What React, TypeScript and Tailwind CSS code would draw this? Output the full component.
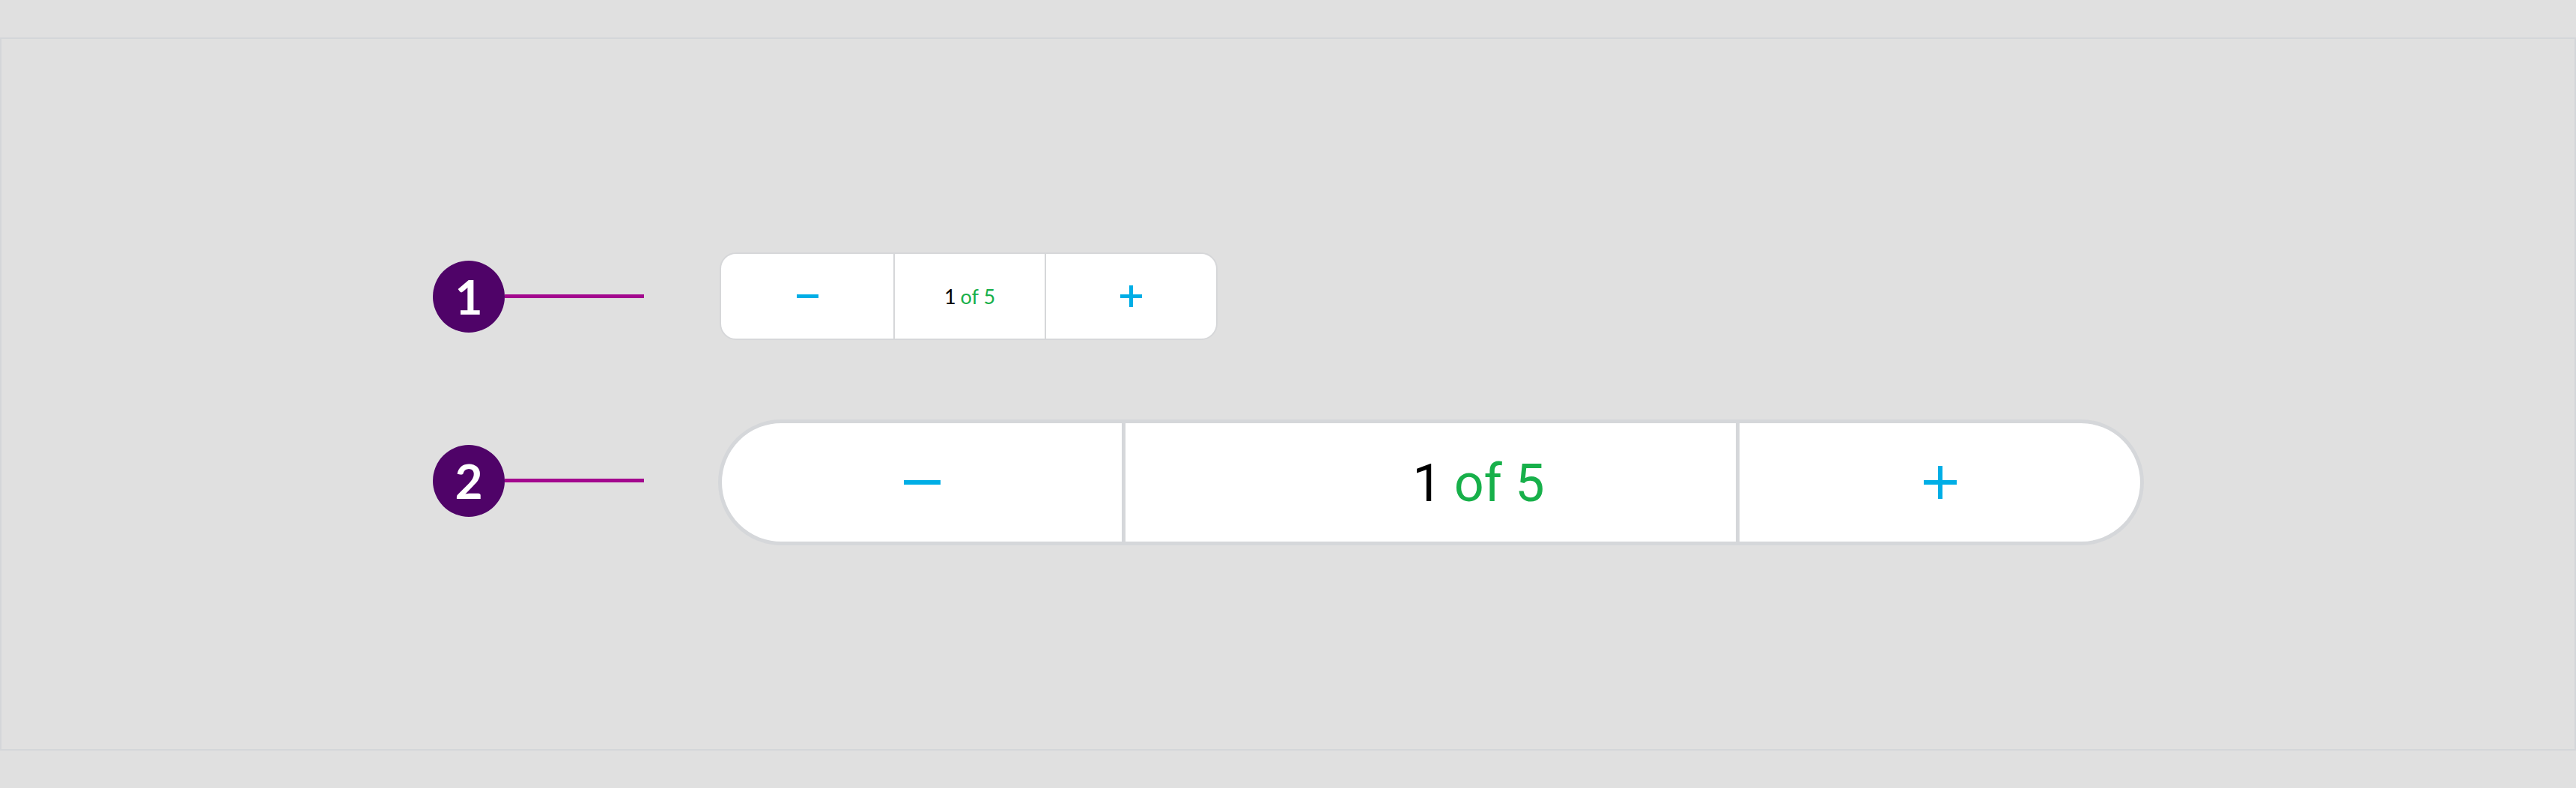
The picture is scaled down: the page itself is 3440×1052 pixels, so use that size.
// Stepper annotation sheet: two sizes of the "1 of 5" pager control

function Badge({ n, lift = 0 }: { n: number; lift?: number }) {
  return (
    <div className={lift ? "flex items-center -mt-[5px]" : "flex items-center"}>
      <div className="w-[96px] h-[96px] rounded-full bg-[#4f0368] flex items-center justify-center text-white font-['Lato',sans-serif] font-bold text-[64px] leading-none">
        {n}
      </div>
      <div className="w-[186px] h-[5px] bg-[#a3078e]" />
    </div>
  );
}

function Minus({ w, t }: { w: number; t: number }) {
  return (
    <svg width={w} height={t} viewBox={`0 0 ${w} ${t}`}>
      <rect x="0" y="0" width={w} height={t} fill="#00aee6" />
    </svg>
  );
}

function Plus({ s, t }: { s: number; t: number }) {
  const m = (s - t) / 2;
  return (
    <svg width={s} height={s} viewBox={`0 0 ${s} ${s}`}>
      <rect x="0" y={m} width={s} height={t} fill="#00aee6" />
      <rect x={m} y="0" width={t} height={s} fill="#00aee6" />
    </svg>
  );
}

export default function App() {
  return (
    <main className="min-h-[1052px] w-full bg-[#e0e0e0] pt-[50px]">
      <div className="h-[952px] w-full border-2 border-[#d4d6d9] pl-[576px] pt-[285px] flex flex-col gap-[106px]">
        {/* Small stepper */}
        <div className="flex items-center h-[117px]">
          <Badge n={1} />
          <div className="ml-[101px] flex w-[665px] h-[117px] border-2 border-[#d6d7d9] rounded-[22px] overflow-hidden bg-white">
            <button className="w-[230px] flex items-center justify-center">
              <Minus w={29} t={5} />
            </button>
            <div className="w-[202px] border-l-2 border-[#d6d7d9] flex items-center justify-center font-['Lato',sans-serif] text-[27px] leading-none">
              <span className="text-black">1</span>
              <span className="text-[#17b04a] ml-[6px]">of 5</span>
            </div>
            <button className="flex-1 border-l-2 border-[#d6d7d9] flex items-center justify-center">
              <Plus s={29} t={5} />
            </button>
          </div>
        </div>

        {/* Large stepper */}
        <div className="flex items-center h-[168px]">
          <Badge n={2} lift={1} />
          <div className="ml-[99px] flex w-[1904px] h-[168px] border-[5px] border-[#d5d7da] rounded-full overflow-hidden bg-white">
            <button className="w-[534px] flex items-center justify-center">
              <Minus w={49} t={6} />
            </button>
            <div className="w-[820px] border-l-[5px] border-[#d5d7da] flex items-center justify-center pl-[128px] pt-[2px] font-['Roboto',sans-serif] text-[70px] leading-none">
              <span className="text-black">1</span>
              <span className="text-[#17b04a] ml-[16px]">of 5</span>
            </div>
            <button className="flex-1 border-l-[5px] border-[#d5d7da] flex items-center justify-center">
              <Plus s={44} t={6} />
            </button>
          </div>
        </div>
      </div>
    </main>
  );
}
